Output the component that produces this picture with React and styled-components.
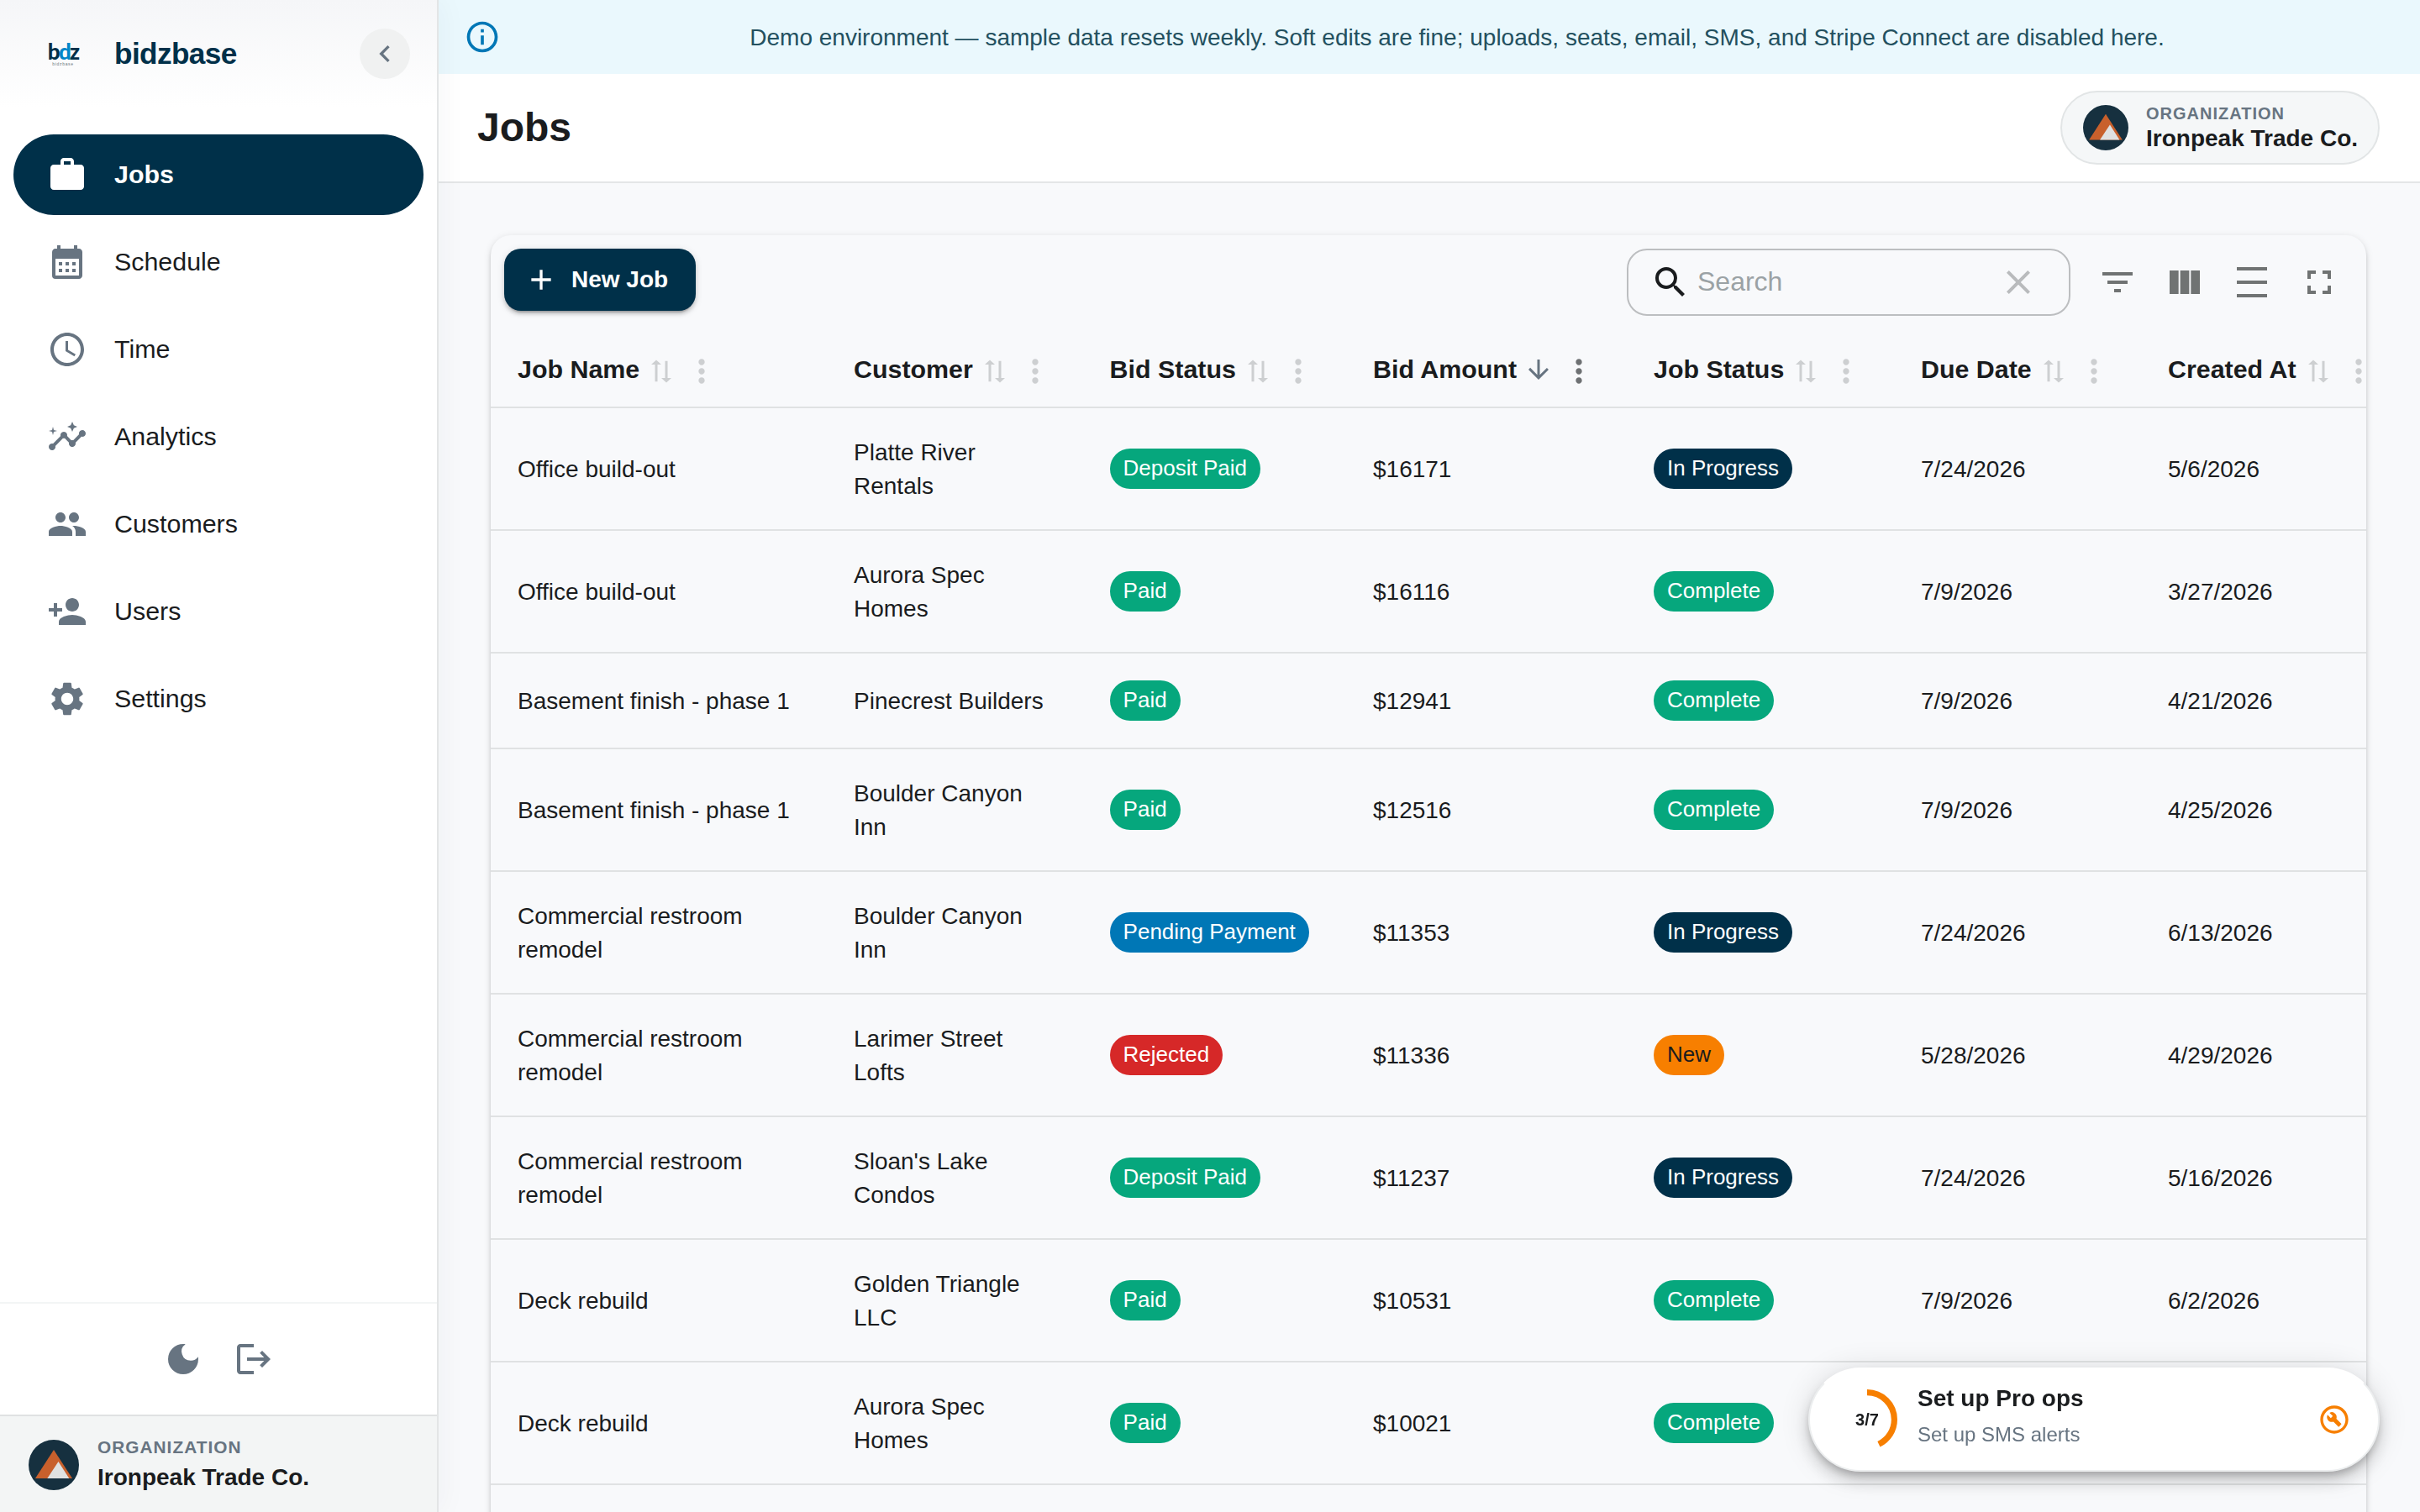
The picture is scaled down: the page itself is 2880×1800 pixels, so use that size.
import React from 'react';
import styled, { createGlobalStyle } from 'styled-components';
import {
  MdAccessTime,
  MdAdd,
  MdArrowDownward,
  MdCalendarMonth,
  MdChevronLeft,
  MdClose,
  MdDarkMode,
  MdDensityMedium,
  MdFilterList,
  MdFullscreen,
  MdInfoOutline,
  MdInsights,
  MdLogout,
  MdMoreVert,
  MdOutlineBuildCircle,
  MdPeople,
  MdPersonAdd,
  MdSearch,
  MdSettings,
  MdSyncAlt,
  MdViewColumn,
  MdWork,
} from 'react-icons/md';

const NAVY = '#003049';
const INK = '#1a1c1e';
const SLATE = '#677481';
const LINE = '#e0e2e3';
const PAGE = '#f8f9fb';

const GlobalStyle = createGlobalStyle`
  * {
    box-sizing: border-box;
  }
  body {
    margin: 0;
    background: ${PAGE};
    color: ${INK};
    font-family: 'Liberation Sans', Arial, sans-serif;
    overflow: hidden;
  }
  svg {
    display: block;
    flex-shrink: 0;
  }
`;

const Layout = styled.div`
  display: flex;
  width: 2880px;
  height: 1800px;
  overflow: hidden;
`;

const Sidebar = styled.aside`
  width: 522px;
  flex-shrink: 0;
  display: flex;
  flex-direction: column;
  background: #ffffff;
  border-right: 2px solid #e3e5e6;
  box-shadow: 4px 0 32px rgba(0, 48, 73, 0.04);
  z-index: 1;
`;

const Brand = styled.div`
  height: 128px;
  display: flex;
  align-items: center;
  padding: 0 32px 0 50px;
  background: linear-gradient(180deg, #f5f6f8 0%, #ffffff 100%);
`;

const Logo = styled.div`
  width: 50px;
  display: flex;
  flex-direction: column;
  align-items: center;
`;

const LogoMark = styled.div`
  font-family: Lato, sans-serif;
  font-size: 26px;
  line-height: 24px;
  font-weight: 900;
  letter-spacing: -1.8px;
  color: ${NAVY};
  span {
    color: #0086c9;
  }
`;

const LogoCaption = styled.div`
  font-size: 5px;
  line-height: 6px;
  letter-spacing: 0.7px;
  color: #6b7780;
`;

const BrandName = styled.div`
  flex: 1;
  margin-left: 36px;
  font-size: 35.2px;
  font-weight: 700;
  letter-spacing: -0.6px;
  color: ${NAVY};
`;

const Collapse = styled.div`
  width: 60px;
  height: 60px;
  border-radius: 50%;
  display: flex;
  align-items: center;
  justify-content: center;
  background: #f0f1f1;
  color: ${SLATE};
`;

const Nav = styled.nav`
  flex: 1;
  display: flex;
  flex-direction: column;
  gap: 8px;
  padding: 32px 16px 0;
`;

const NavItem = styled.div`
  height: 96px;
  border-radius: 48px;
  display: flex;
  align-items: center;
  gap: 32px;
  padding: 0 40px;
  font-size: 30.4px;
  font-weight: ${props => (props.$active ? 700 : 400)};
  color: ${props => (props.$active ? '#ffffff' : INK)};
  background: ${props => (props.$active ? NAVY : 'transparent')};
  svg {
    color: ${props => (props.$active ? '#ffffff' : SLATE)};
  }
`;

const NavLabel = styled.span`
  padding-bottom: 2px;
`;

const SideActions = styled.div`
  height: 134px;
  border-top: 2px solid #f3f5f5;
  display: flex;
  align-items: center;
  justify-content: center;
  gap: 36px;
  color: ${SLATE};
`;

const SideOrg = styled.div`
  height: 116px;
  border-top: 2px solid ${LINE};
  background: #f3f5f5;
  display: flex;
  align-items: center;
  gap: 22px;
  padding: 2px 34px 0;
`;

const OrgText = styled.div`
  padding-bottom: ${props => props.$lift || 0}px;
`;

const OrgLabel = styled.div`
  font-size: ${props => props.$size}px;
  line-height: ${props => props.$leading}px;
  font-weight: 700;
  letter-spacing: 0.05em;
  color: ${SLATE};
`;

const OrgName = styled.div`
  font-size: 28px;
  line-height: ${props => props.$leading}px;
  font-weight: 700;
  white-space: nowrap;
`;

const Main = styled.main`
  flex: 1;
  min-width: 0;
  display: flex;
  flex-direction: column;
`;

const Banner = styled.div`
  height: 88px;
  flex-shrink: 0;
  display: flex;
  align-items: center;
  gap: 22px;
  padding: 0 30px;
  background: #eaf8fd;
  color: #0077b6;
`;

const BannerText = styled.div`
  flex: 1;
  padding-top: 2px;
  text-align: center;
  font-size: 28px;
  white-space: nowrap;
  color: #23505f;
`;

const Header = styled.header`
  height: 130px;
  flex-shrink: 0;
  display: flex;
  align-items: center;
  justify-content: space-between;
  padding: 0 48px 0 46px;
  background: #ffffff;
  border-bottom: 2px solid #e4e6e7;
`;

const Title = styled.h1`
  margin: 0;
  padding-bottom: 2px;
  font-size: 48px;
  font-weight: 700;
`;

const OrgPill = styled.div`
  width: 380px;
  height: 88px;
  border: 2px solid #e2e5e6;
  border-radius: 44px;
  background: #f5f7f8;
  display: flex;
  align-items: center;
  gap: 21px;
  padding-left: 25px;
`;

const Card = styled.section`
  width: 2232px;
  height: 1560px;
  flex-shrink: 0;
  margin: 62px 0 0 62px;
  border-radius: 24px;
  background: ${PAGE};
  box-shadow: 0 6px 2px -4px rgba(0, 0, 0, 0.2), 0 4px 4px rgba(0, 0, 0, 0.14),
    0 2px 10px rgba(0, 0, 0, 0.12);
  overflow: hidden;
`;

const Toolbar = styled.div`
  height: 112px;
  display: flex;
  align-items: flex-start;
  padding: 16px 32px 0 16px;
`;

const NewJob = styled.div`
  width: 228px;
  height: 74px;
  border-radius: 20px;
  display: flex;
  align-items: center;
  gap: 16px;
  padding-left: 24px;
  margin-right: auto;
  background: ${NAVY};
  color: #ffffff;
  font-size: 28px;
  font-weight: 700;
  box-shadow: 0 6px 2px -4px rgba(0, 0, 0, 0.2), 0 4px 4px rgba(0, 0, 0, 0.14),
    0 2px 10px rgba(0, 0, 0, 0.12);
`;

const Search = styled.div`
  width: 528px;
  height: 80px;
  border: 2px solid #bcbec0;
  border-radius: 24px;
  display: flex;
  align-items: center;
  padding: 0 36px 0 26px;
  margin-right: 32px;
`;

const Placeholder = styled.div`
  flex: 1;
  margin-left: 8px;
  padding-bottom: 2px;
  font-size: 32px;
  color: #9ba2a5;
`;

const ToolIcons = styled.div`
  height: 80px;
  display: flex;
  align-items: center;
  gap: 32px;
  color: #707373;
`;

const Row = styled.div`
  display: grid;
  grid-template-columns: 400px 304.6px 313.4px 334px 318px 294px 1fr;
  align-items: center;
  border-bottom: 2px solid ${LINE};
`;

const HeadRow = styled(Row)`
  height: 94px;
`;

const HeadCell = styled.div`
  display: flex;
  align-items: center;
  padding: 2px 0 0 32px;
  font-size: 30.4px;
  font-weight: 700;
  white-space: nowrap;
`;

const SortIcon = styled.div`
  width: 36px;
  margin: ${props => (props.$active ? 2 : 5)}px 0 0 8px;
  color: ${props => (props.$active ? SLATE : '#cdcfd1')};
  svg {
    transform: ${props => (props.$active ? 'none' : 'rotate(-90deg) scaleX(0.9)')};
  }
`;

const MenuIcon = styled.div`
  margin: 6px 0 0 8px;
  color: ${props => (props.$active ? '#6e7173' : '#cdcfd1')};
`;

const ChipCell = styled.div`
  padding: 32px;
  line-height: 40px;
`;

const TextCell = styled.div`
  padding: 33px 32px 31px;
  font-size: 28px;
  line-height: 40px;
`;

const CHIP_COLORS = {
  'Deposit Paid': '#06a77d',
  Paid: '#06a77d',
  Complete: '#06a77d',
  'Pending Payment': '#0077b6',
  Rejected: '#d62828',
  New: '#f77f00',
  'In Progress': NAVY,
};

const Chip = styled.span`
  display: inline-block;
  vertical-align: top;
  height: 48px;
  line-height: 46px;
  border-radius: 24px;
  padding: 0 16px;
  font-size: 26px;
  white-space: nowrap;
  color: ${props => (props.$label === 'New' ? INK : '#ffffff')};
  background: ${props => CHIP_COLORS[props.$label]};
`;

const SetupCard = styled.div`
  position: fixed;
  right: 48px;
  bottom: 48px;
  width: 680px;
  height: 124px;
  border-radius: 62px;
  border: 2px solid #eceeef;
  border-top-color: #ffffff;
  display: flex;
  align-items: center;
  padding: 0 32px;
  background: #ffffff;
  box-shadow: 0 6px 10px -2px rgba(0, 0, 0, 0.2),
    0 12px 20px rgba(0, 0, 0, 0.14), 0 2px 36px rgba(0, 0, 0, 0.12);
  z-index: 2;
  color: #f77f00;
`;

const Progress = styled.div`
  display: grid;
  place-items: center;
  width: 72px;
  height: 72px;
  margin-right: 24px;
  > * {
    grid-area: 1 / 1;
  }
`;

const ProgressLabel = styled.div`
  font-size: 20px;
  font-weight: 700;
  color: ${INK};
`;

const SetupText = styled.div`
  flex: 1;
  padding-bottom: 9px;
`;

const SetupTitle = styled.div`
  font-size: 28px;
  line-height: 44px;
  font-weight: 700;
  color: ${INK};
`;

const SetupHint = styled.div`
  font-size: 24px;
  line-height: 42px;
  color: ${SLATE};
`;

const NAV = [
  ['Jobs', MdWork],
  ['Schedule', MdCalendarMonth],
  ['Time', MdAccessTime],
  ['Analytics', MdInsights],
  ['Customers', MdPeople],
  ['Users', MdPersonAdd],
  ['Settings', MdSettings],
];

const COLUMNS = [
  'Job Name',
  'Customer',
  'Bid Status',
  'Bid Amount',
  'Job Status',
  'Due Date',
  'Created At',
];

const JOBS = [
  ['Office build-out', 'Platte River Rentals', 'Deposit Paid', '$16171', 'In Progress', '7/24/2026', '5/6/2026'],
  ['Office build-out', 'Aurora Spec Homes', 'Paid', '$16116', 'Complete', '7/9/2026', '3/27/2026'],
  ['Basement finish - phase 1', 'Pinecrest Builders', 'Paid', '$12941', 'Complete', '7/9/2026', '4/21/2026'],
  ['Basement finish - phase 1', 'Boulder Canyon Inn', 'Paid', '$12516', 'Complete', '7/9/2026', '4/25/2026'],
  ['Commercial restroom remodel', 'Boulder Canyon Inn', 'Pending Payment', '$11353', 'In Progress', '7/24/2026', '6/13/2026'],
  ['Commercial restroom remodel', 'Larimer Street Lofts', 'Rejected', '$11336', 'New', '5/28/2026', '4/29/2026'],
  ['Commercial restroom remodel', "Sloan's Lake Condos", 'Deposit Paid', '$11237', 'In Progress', '7/24/2026', '5/16/2026'],
  ['Deck rebuild', 'Golden Triangle LLC', 'Paid', '$10531', 'Complete', '7/9/2026', '6/2/2026'],
  ['Deck rebuild', 'Aurora Spec Homes', 'Paid', '$10021', 'Complete', '', ''],
];

const PeakLogo = ({ size }) => (
  <svg width={size} height={size} viewBox="0 0 60 60">
    <circle cx="30" cy="30" r="30" fill="#16303f" />
    <path d="M30 12L52 46H8z" fill="#c8602c" />
    <path d="M35.5 26L48.3 46H22.3z" fill="#e0e1e1" />
  </svg>
);

const JobRow = ({ job }) => {
  const [name, customer, bidStatus, amount, jobStatus, due, created] = job;
  return (
    <Row>
      <TextCell>{name}</TextCell>
      <TextCell>{customer}</TextCell>
      <ChipCell>
        <Chip $label={bidStatus}>{bidStatus}</Chip>
      </ChipCell>
      <TextCell>{amount}</TextCell>
      <ChipCell>
        <Chip $label={jobStatus}>{jobStatus}</Chip>
      </ChipCell>
      <TextCell>{due}</TextCell>
      <TextCell>{created}</TextCell>
    </Row>
  );
};

const App = () => {
  return (
    <Layout>
      <GlobalStyle />
      <Sidebar>
        <Brand>
          <Logo>
            <LogoMark>
              b<span>d</span>z
            </LogoMark>
            <LogoCaption>bidzbase</LogoCaption>
          </Logo>
          <BrandName>bidzbase</BrandName>
          <Collapse>
            <MdChevronLeft size={40} />
          </Collapse>
        </Brand>
        <Nav>
          {NAV.map(([label, Icon]) => (
            <NavItem key={label} $active={label === 'Jobs'}>
              <Icon size={48} />
              <NavLabel>{label}</NavLabel>
            </NavItem>
          ))}
        </Nav>
        <SideActions>
          <MdDarkMode size={48} />
          <MdLogout size={48} />
        </SideActions>
        <SideOrg>
          <PeakLogo size={60} />
          <OrgText $lift={2}>
            <OrgLabel $size={20.8} $leading={32}>ORGANIZATION</OrgLabel>
            <OrgName $leading={40}>Ironpeak Trade Co.</OrgName>
          </OrgText>
        </SideOrg>
      </Sidebar>
      <Main>
        <Banner>
          <MdInfoOutline size={44} />
          <BannerText>
            Demo environment — sample data resets weekly. Soft edits are fine; uploads, seats, email, SMS, and Stripe Connect are disabled here.
          </BannerText>
        </Banner>
        <Header>
          <Title>Jobs</Title>
          <OrgPill>
            <PeakLogo size={54} />
            <OrgText>
              <OrgLabel $size={20} $leading={26}>ORGANIZATION</OrgLabel>
              <OrgName $leading={34}>Ironpeak Trade Co.</OrgName>
            </OrgText>
          </OrgPill>
        </Header>
        <Card>
          <Toolbar>
            <NewJob>
              <MdAdd size={40} />
              New Job
            </NewJob>
            <Search>
              <MdSearch size={48} color={INK} />
              <Placeholder>Search</Placeholder>
              <MdClose size={48} color="#b9bbbd" />
            </Search>
            <ToolIcons>
              <MdFilterList size={48} />
              <MdViewColumn size={48} />
              <MdDensityMedium size={48} />
              <MdFullscreen size={48} />
            </ToolIcons>
          </Toolbar>
          <HeadRow>
            {COLUMNS.map(label => {
              const sorted = label === 'Bid Amount';
              return (
                <HeadCell key={label}>
                  {label}
                  <SortIcon $active={sorted}>
                    {sorted ? <MdArrowDownward size={36} /> : <MdSyncAlt size={36} />}
                  </SortIcon>
                  <MenuIcon $active={sorted}>
                    <MdMoreVert size={44} />
                  </MenuIcon>
                </HeadCell>
              );
            })}
          </HeadRow>
          {JOBS.map((job, i) => (
            <JobRow key={i} job={job} />
          ))}
        </Card>
      </Main>
      <SetupCard>
        <Progress>
          <svg width="72" height="72" viewBox="22 22 44 44">
            <circle
              cx="44"
              cy="44"
              r="19.8"
              fill="none"
              stroke="currentColor"
              strokeWidth="4.4"
              strokeDasharray="53.3 124.4"
              transform="rotate(-90 44 44)"
            />
          </svg>
          <ProgressLabel>3/7</ProgressLabel>
        </Progress>
        <SetupText>
          <SetupTitle>Set up Pro ops</SetupTitle>
          <SetupHint>Set up SMS alerts</SetupHint>
        </SetupText>
        <MdOutlineBuildCircle size={40} />
      </SetupCard>
    </Layout>
  );
};

export default App;
